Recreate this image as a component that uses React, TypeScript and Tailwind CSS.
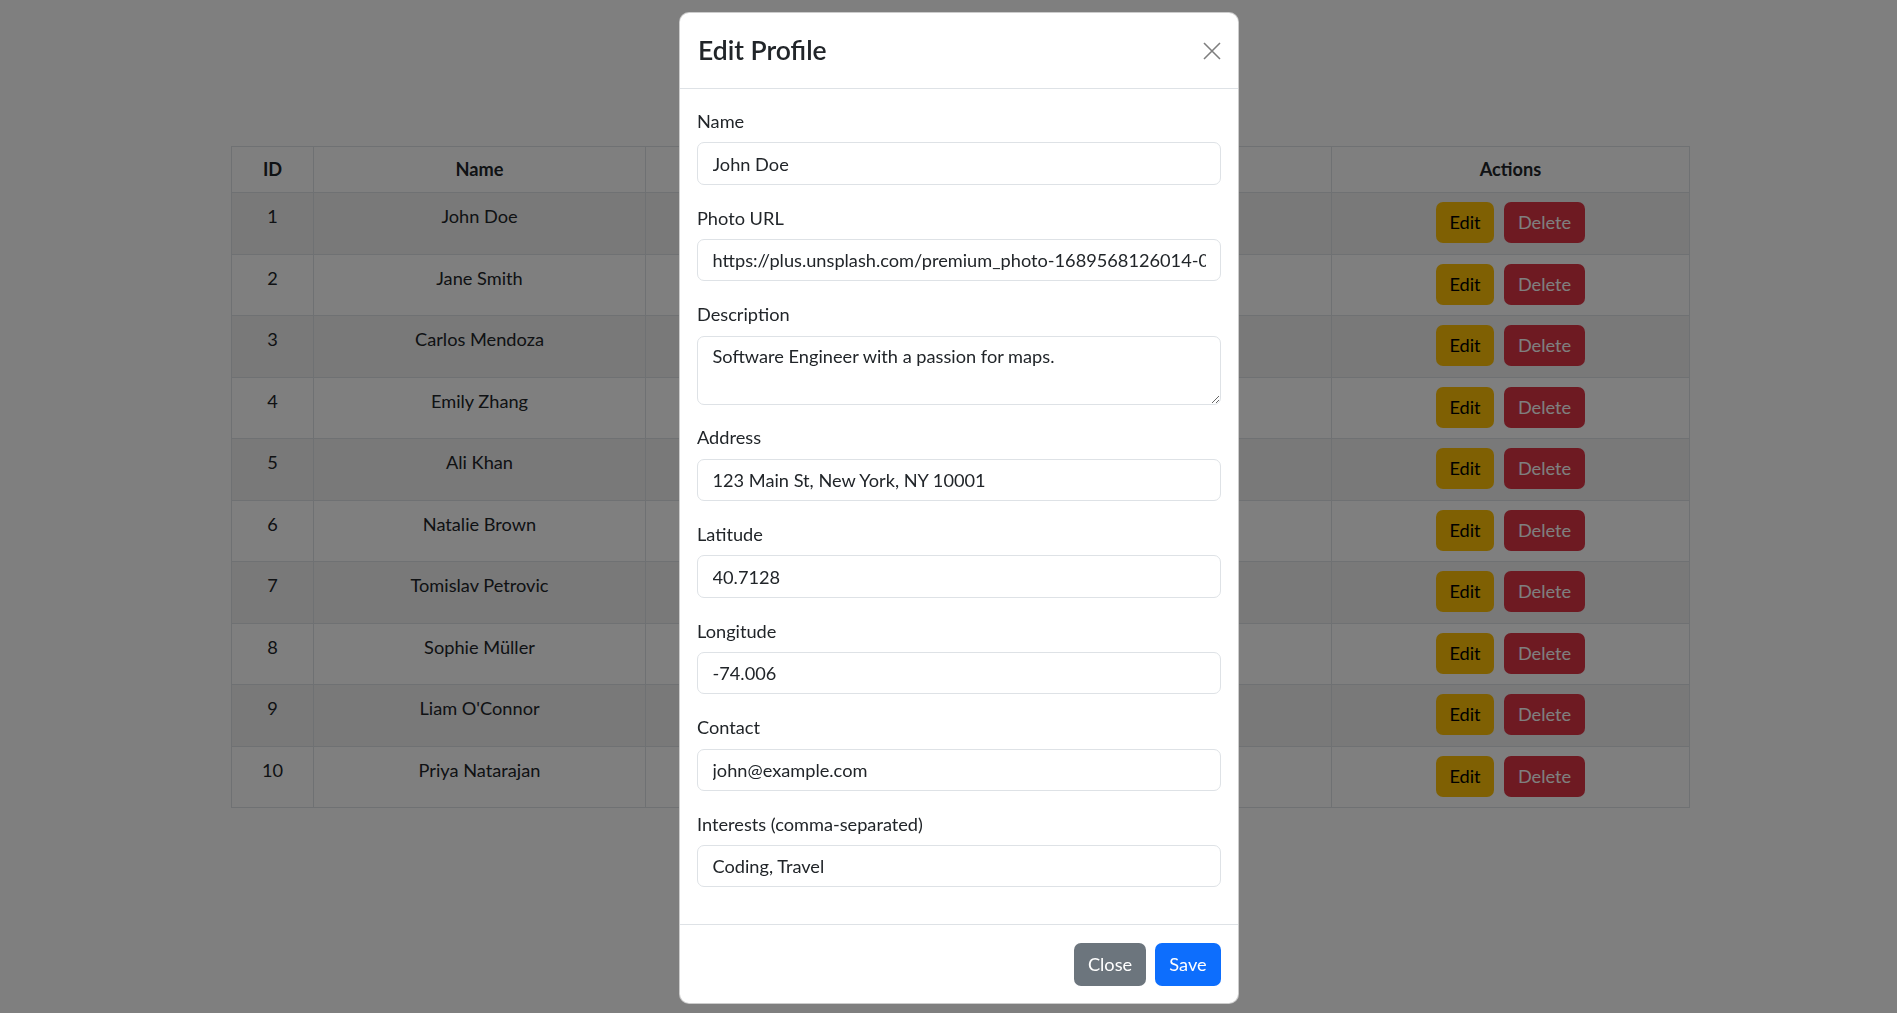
import React from "react";

const people = [
  { id: 1, name: "John Doe", desc: "Software Engineer" },
  { id: 2, name: "Jane Smith", desc: "Product Designer" },
  { id: 3, name: "Carlos Mendoza", desc: "Data Analyst" },
  { id: 4, name: "Emily Zhang", desc: "UX Researcher" },
  { id: 5, name: "Ali Khan", desc: "DevOps Engineer" },
  { id: 6, name: "Natalie Brown", desc: "Marketing Lead" },
  { id: 7, name: "Tomislav Petrovic", desc: "Backend Developer" },
  { id: 8, name: "Sophie Müller", desc: "Project Manager" },
  { id: 9, name: "Liam O'Connor", desc: "QA Engineer" },
  { id: 10, name: "Priya Natarajan", desc: "ML Engineer" },
];

const fields = [
  { label: "Name", value: "John Doe" },
  {
    label: "Photo URL",
    value:
      "https://plus.unsplash.com/premium_photo-1689568126014-06fcec1cf36e?q=80&w=1470&auto=format&fit=crop",
  },
  { label: "Description", value: "Software Engineer with a passion for maps.", area: true },
  { label: "Address", value: "123 Main St, New York, NY 10001" },
  { label: "Latitude", value: "40.7128" },
  { label: "Longitude", value: "-74.006" },
  { label: "Contact", value: "john@example.com" },
  { label: "Interests (comma-separated)", value: "Coding, Travel" },
];

const font = { fontFamily: '"Segoe UI", Lato, "Noto Sans", sans-serif' };

export default function App() {
  return (
    <div className="relative min-h-screen bg-white text-[18.2px] text-[#212529]" style={font}>
      {/* Table behind the modal */}
      <div className="pt-[146px] pl-[231px]">
        <table className="w-[1458px] table-fixed border-collapse text-center leading-[29px]">
          <thead>
            <tr className="h-[46px]">
              <th className="w-[82px] border border-[#dee2e6] py-[8px] font-bold">ID</th>
              <th className="w-[332px] border border-[#dee2e6] py-[8px] font-bold">Name</th>
              <th className="w-[686px] border border-[#dee2e6] py-[8px] font-bold">Description</th>
              <th className="w-[358px] border border-[#dee2e6] py-[8px] font-bold">Actions</th>
            </tr>
          </thead>
          <tbody>
            {people.map((p, i) => (
              <tr key={p.id} className={`h-[61.5px] ${i % 2 === 0 ? "bg-[#f2f2f2]" : "bg-white"}`}>
                <td className="border border-[#dee2e6] py-[9px] align-top">{p.id}</td>
                <td className="border border-[#dee2e6] py-[9px] align-top">{p.name}</td>
                <td className="border border-[#dee2e6] py-[9px] align-top">{p.desc}</td>
                <td className="border border-[#dee2e6] py-[9px] align-top">
                  <div className="flex justify-center gap-[10px]">
                    <button className="h-[41px] w-[58px] rounded-[7px] bg-[#ffc107] text-black">Edit</button>
                    <button className="h-[41px] w-[81px] rounded-[7px] bg-[#dc3545] text-white">Delete</button>
                  </div>
                </td>
              </tr>
            ))}
          </tbody>
        </table>
      </div>

      {/* Backdrop */}
      <div className="fixed inset-0 bg-black/50" />

      {/* Modal */}
      <div className="fixed inset-0 flex justify-center pl-[21px] pt-[12px]">
        <div className="h-fit w-[560px] rounded-[10px] border border-black/20 bg-white">
          <div className="flex h-[76px] items-center justify-between border-b border-[#dee2e6] px-[17px]">
            <h5 className="pl-[1px] text-[26.5px] font-semibold leading-[29px]">Edit Profile</h5>
            <button className="flex h-[18px] w-[18px] items-center justify-center opacity-50">
              <svg width="18" height="18" viewBox="0 0 18 18">
                <path d="M1 1 L17 17 M17 1 L1 17" stroke="#000" strokeWidth="1.6" />
              </svg>
            </button>
          </div>

          <div className="px-[17px] pt-[18px] pb-[17.8px]">
            {fields.map((f) => (
              <div key={f.label} className="mb-[18.9px]">
                <label className="mb-[6.4px] block h-[29px] leading-[29px]">{f.label}</label>
                {f.area ? (
                  <textarea
                    defaultValue={f.value}
                    className="block h-[69px] w-full rounded-[7px] border border-[#dee2e6] px-[14.5px] pt-[5px] pb-[7px] leading-[29px] outline-none"
                  />
                ) : (
                  <input
                    defaultValue={f.value}
                    className="block h-[42.3px] w-full rounded-[7px] border border-[#dee2e6] px-[14.5px] outline-none"
                  />
                )}
              </div>
            ))}
          </div>

          <div className="flex justify-end gap-[9px] border-t border-[#dee2e6] px-[17px] pt-[18px] pb-[17px]">
            <button className="h-[43px] w-[72px] rounded-[7px] bg-[#6c757d] text-white">Close</button>
            <button className="h-[43px] w-[66px] rounded-[7px] bg-[#0d6efd] text-white">Save</button>
          </div>
        </div>
      </div>
    </div>
  );
}
